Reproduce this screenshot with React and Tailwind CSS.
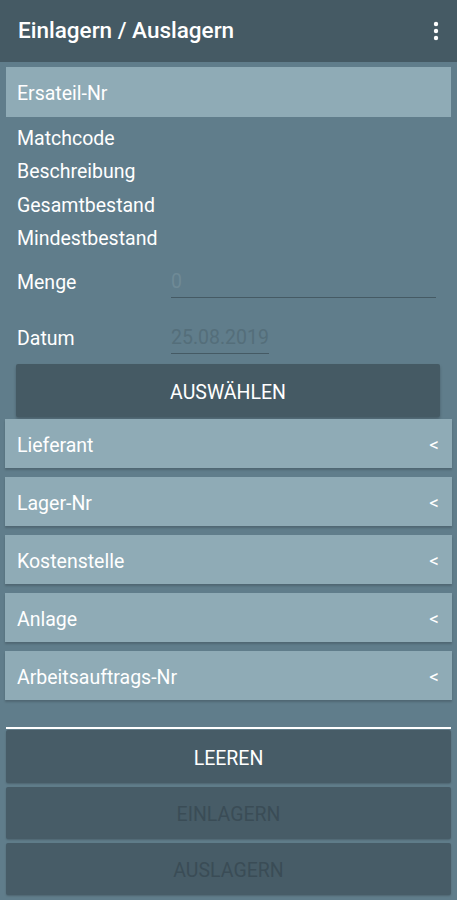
import React from "react";

const font = { fontFamily: "Roboto, 'Noto Sans', sans-serif" };

function Row({ label }) {
  return (
    <div className="mx-[5px] h-[49px] bg-[#8fabb6] flex items-center justify-between pl-[12px] pr-[13px] pt-[4px] shadow-[0_2px_2px_rgba(0,0,0,0.18)]">
      <span className="text-white text-[19.5px]">{label}</span>
      <span className="text-white text-[19px]">&lt;</span>
    </div>
  );
}

export default function App() {
  return (
    <div className="w-[457px] h-[900px] bg-[#607d8b] overflow-hidden flex flex-col" style={font}>
      <div className="h-[62px] bg-[#455a64] flex items-center justify-between pl-[18px] pr-[16px] shrink-0">
        <span className="text-white text-[22.5px] font-medium">Einlagern / Auslagern</span>
        <svg width="6" height="20" viewBox="0 0 6 20" className="mr-[2px]">
          <circle cx="3" cy="3" r="2.2" fill="#fff" />
          <circle cx="3" cy="10" r="2.2" fill="#fff" />
          <circle cx="3" cy="17" r="2.2" fill="#fff" />
        </svg>
      </div>

      <div className="mt-[5px] mx-[6px] h-[50px] bg-[#8fabb6] flex items-center pl-[11px] pt-[4px]">
        <span className="text-white text-[19.5px]">Ersateil-Nr</span>
      </div>

      <div className="mt-[3px] pl-[17px] flex flex-col text-white text-[19.5px]">
        <div className="h-[33.5px] flex items-center pt-[3px]">Matchcode</div>
        <div className="h-[33.5px] flex items-center pt-[3px]">Beschreibung</div>
        <div className="h-[33.5px] flex items-center pt-[3px]">Gesamtbestand</div>
        <div className="h-[33.5px] flex items-center pt-[3px]">Mindestbestand</div>
      </div>

      <div className="mt-[10px] h-[34px] flex items-stretch pl-[17px]">
        <div className="w-[154px] flex items-center text-white text-[19.5px] pt-[3px]">Menge</div>
        <div className="w-[265px] border-b border-[#455a64] flex items-center text-[19.5px] text-[#6f8a96] pt-[3px]">0</div>
      </div>

      <div className="mt-[22px] h-[34px] flex items-stretch pl-[17px]">
        <div className="w-[154px] flex items-center text-white text-[19.5px] pt-[3px]">Datum</div>
        <div className="w-[98px] border-b border-[#455a64] flex items-center text-[19.5px] text-[#546e7a] pt-[3px]">25.08.2019</div>
      </div>

      <div className="mt-[10px] mx-[16px] w-[424px] h-[53px] bg-[#455a64] rounded-[2px] flex items-center justify-center pt-[4px] shadow-[0_2px_3px_rgba(0,0,0,0.25)]">
        <span className="text-white text-[19.5px]">AUSWÄHLEN</span>
      </div>

      <div className="mt-[2px] flex flex-col gap-[9px]">
        <Row label="Lieferant" />
        <Row label="Lager-Nr" />
        <Row label="Kostenstelle" />
        <Row label="Anlage" />
        <Row label="Arbeitsauftrags-Nr" />
      </div>

      <div className="mt-[27px] mx-[6px] h-[2px] bg-white" />

      <div className="mt-[1px] flex flex-col gap-[4px] mx-[6px]">
        <div className="h-[53px] bg-[#475c67] rounded-[2px] flex items-center justify-center pt-[4px] shadow-[0_1px_2px_rgba(0,0,0,0.2)]">
          <span className="text-white text-[19.5px]">LEEREN</span>
        </div>
        <div className="h-[52px] bg-[#475c67] rounded-[2px] flex items-center justify-center pt-[4px] shadow-[0_1px_2px_rgba(0,0,0,0.2)]">
          <span className="text-[#3a4c56] text-[19.5px]">EINLAGERN</span>
        </div>
        <div className="h-[52px] bg-[#475c67] rounded-[2px] flex items-center justify-center pt-[4px] shadow-[0_1px_2px_rgba(0,0,0,0.2)]">
          <span className="text-[#3a4c56] text-[19.5px]">AUSLAGERN</span>
        </div>
      </div>
    </div>
  );
}
